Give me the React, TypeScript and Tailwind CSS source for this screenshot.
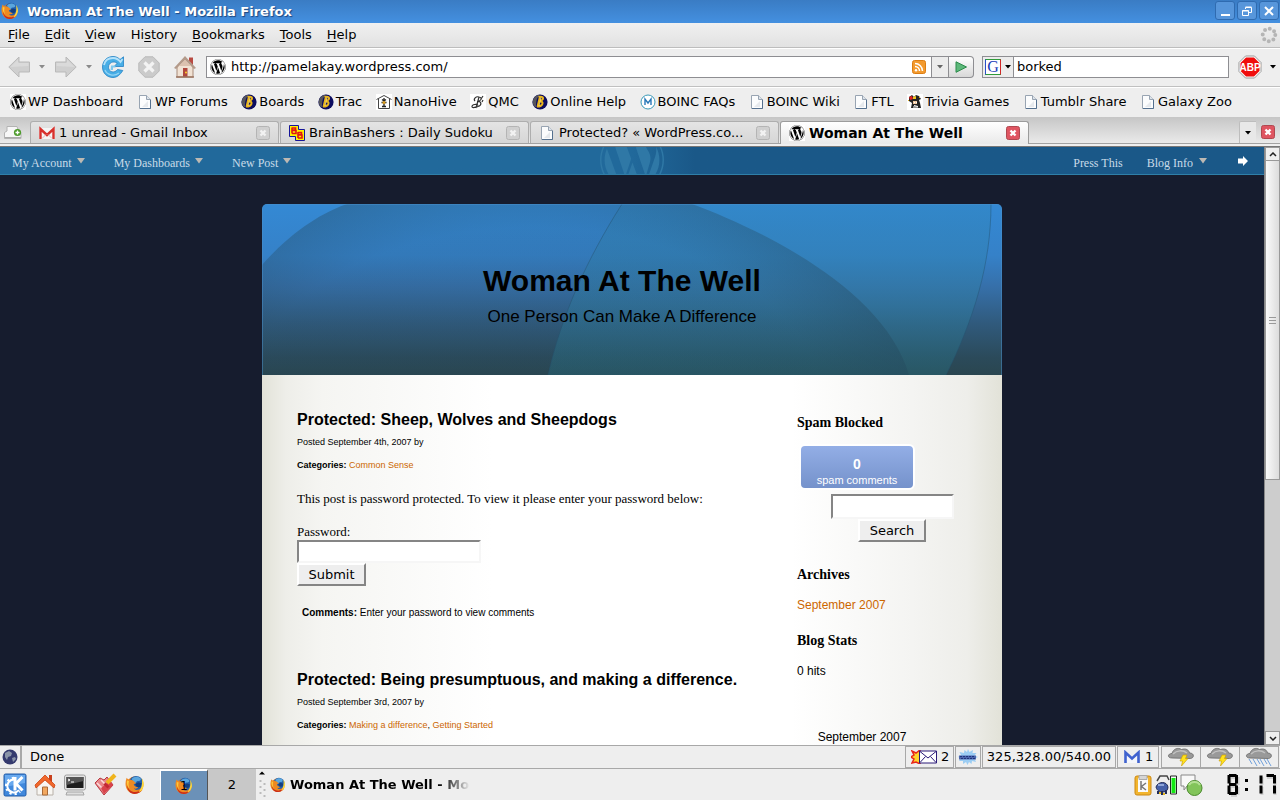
import React, { useState } from "react";
import { FaWordpress } from "react-icons/fa";

type IconProps = { className?: string };

/* ---------- Icons ---------- */

function FirefoxIcon({ className = "w-[18px] h-[18px]" }: IconProps) {
  return (
    <svg viewBox="0 0 18 18" className={className} aria-hidden="true">
      <circle cx="9" cy="9" r="7.6" fill="#e87a1c" />
      <circle cx="10" cy="7.200" r="6.400" fill="#2360ac" />
      <path d="M6 3.500C8 1 12 .8 14 3c1 2-1 2.500-2.500 2.500S10 8 8 7.500z" fill="#5aa6de" />
      <path d="M9 8l3-1.500 3 1-1 3-3 1z" fill="#153f80" />
      <path d="M1.500 2.500C-.2 7 0 12 3.500 15c4 3.200 10 2.200 12.500-2-2.500 1.800-6.500 1.600-8-1 1.600.6 3 .2 4-1-2.200 0-3.600-1-4.200-2.400.6-.9 1.400-1 2.200-1.200C8.500 6 7.500 4.500 5.200 4.200 4 4.400 2.500 4 1.500 2.500z" fill="#ee8a22" />
      <path d="M2 9c.4 3.400 2.500 5.600 5.600 6.200 3.200.6 6-.6 7.800-3-.8 3.200-3.600 4.800-6.600 4.800C4.600 17 1.600 13.600 2 9z" fill="#cb2c1a" />
      <path d="M15 3c2.500 3 2.600 7.400.4 10.200-1 1.200-2 1.800-3.200 2C15 12.500 16 7.500 15 3z" fill="#ffd83c" />
      <path d="M1.800 5c-.4 2.800.2 5.400 2.400 7.400C3 10 3 8 3.600 5.400z" fill="#ffc93a" />
    </svg>
  );
}

function PageIcon() {
  return (
    <svg viewBox="0 0 16 16" className="w-4 h-4 shrink-0" aria-hidden="true">
      <path d="M2.500 1.500h7l4 4v9h-11z" fill="#fbfcfd" stroke="#98a4b2" />
      <path d="M3 14.500h10.500v-9" fill="none" stroke="#54708f" />
      <path d="M9.500 1.500v4h4" fill="#dde3ea" stroke="#98a4b2" />
      <path d="M5 13l6-6v6z" fill="#e6e9ed" />
    </svg>
  );
}

function WpIcon() {
  return (
    <span className="w-4 h-4 bg-white shrink-0">
      <FaWordpress className="w-4 h-4 text-black" />
    </span>
  );
}

function BoardsIcon() {
  return (
    <svg viewBox="0 0 16 16" className="w-4 h-4 shrink-0" aria-hidden="true">
      <circle cx="8" cy="8" r="7.600" fill="#0c0c60" />
      <path d="M.8 9a7.200 7.200 0 0 1 8-8.200C5 3 4 6 4 13.500 2 12 1 11 .8 9z" fill="#55555c" />
      <path d="M8 2.500L5.500 13M6.500 3c6-1.500 6 3 .5 4.500 5.500-1 4.500 5-2 5" fill="none" stroke="#e9b51c" strokeWidth="2" />
      <path d="M9 3.500L7 12" stroke="#fbe27a" strokeWidth=".8" />
    </svg>
  );
}

function HiveIcon() {
  return (
    <svg viewBox="0 0 16 16" className="w-4 h-4 shrink-0" aria-hidden="true">
      <path fill="#fff" d="M0 0h16v16H0z" />
      <path d="M.5 5.500L8 1.500l7.500 4M2.500 5v9.500h11V5" fill="none" stroke="#444" />
      <path d="M8 4v9M5.500 8.500h5M6 12.500h4M6 5.500l2 1.500 2-1.500" fill="none" stroke="#222" strokeWidth="1.300" />
      <circle cx="8" cy="8.500" r="1.600" fill="#d99c20" />
    </svg>
  );
}

function QmcIcon() {
  return (
    <svg viewBox="0 0 16 16" className="w-4 h-4 shrink-0" aria-hidden="true">
      <path fill="#fff" d="M0 0h16v16H0z" />
      <path d="M9 3L6 14M5 7c-2-2 1-5 4-4 4 1 2 4-2 4.500 5-.5 5 4 1 5-3 .8-6 2-6 0s5-3 6-1M13 2l-2 3M13 6l-1 2" fill="none" stroke="#333" strokeWidth="1.200" />
    </svg>
  );
}

function BoincIcon() {
  return (
    <svg viewBox="0 0 16 16" className="w-4 h-4 shrink-0" aria-hidden="true">
      <circle cx="8" cy="8" r="7" fill="#fff" stroke="#3a9ab8" />
      <path d="M5 11V5l3 4 3-4v6" fill="none" stroke="#2878b8" strokeWidth="1.400" />
    </svg>
  );
}

function JesterIcon() {
  return (
    <svg viewBox="0 0 16 16" className="w-4 h-4 shrink-0" aria-hidden="true">
      <path fill="#fff" d="M0 0h16v16H0z" />
      <path d="M2 3l3-2 2 2 2-2 3 1 2 3-2 1 1 3 1 5H4l1-5-3-2z" fill="#222" />
      <path d="M2 3l3-1 1 3-3 1z" fill="#e02020" />
      <path d="M6 3l3-1v3H6z" fill="#f0c820" />
      <path d="M6 7h4v3H6z" fill="#f0c8a0" />
      <path d="M6 13h5M7 11.500l4 1M7 8.500h1M9 8.500h1" stroke="#fff" />
      <path d="M12 3h1v1h-1zM1 6h1v1H1z" fill="#e0b020" />
    </svg>
  );
}

function GmailIcon() {
  return (
    <svg viewBox="0 0 16 16" className="w-4 h-4 shrink-0" aria-hidden="true">
      <path d="M0 3h16v11H0z" fill="#f5f5f5" />
      <path d="M1.500 14V4L8 10l6.500-6v10" fill="none" stroke="#d8302c" strokeWidth="2.400" />
      <path d="M3 13.500l4-4M13 13.500l-4-4" stroke="#e9b4b2" />
    </svg>
  );
}

function BrainIcon() {
  return (
    <svg viewBox="0 0 16 16" className="w-4 h-4 shrink-0" aria-hidden="true">
      <path d="M.5.500h9v4h6v11h-9v-4h-6z" fill="#fff200" stroke="#15159a" />
      <path d="M3 2.500v6M3 3h3.500v2H3M3 5.500h4v3H3M9 7v6M9 7.500h3.500v2H9M9 10h4v3H9" fill="none" stroke="#e01414" strokeWidth="1.600" />
    </svg>
  );
}

function ArrowIcon({ flip }: { flip?: boolean }) {
  return (
    <svg viewBox="0 0 22 22" className={flip ? "w-[22px] h-[22px] -scale-x-100" : "w-[22px] h-[22px]"} aria-hidden="true">
      <path d="M.8 11L11 1v5h10.500v10H11v5z" fill="#cfcfcf" stroke="#b9b9b9" strokeLinejoin="round" />
      <path d="M2.500 11l7.500-7.500V7h10.500v3z" fill="#dadada" />
    </svg>
  );
}

function ReloadIcon() {
  return (
    <svg viewBox="0 0 22 22" className="w-[22px] h-[22px]" aria-hidden="true">
      <path d="M21.500.800v9.700h-9.300l3-3.300c-3.500-2.700-8.700-.7-8.700 4 0 5 6.200 6.500 9 2.300l5.300 1C18 19 15 21.500 11 21.500 5 21.500.5 17 .5 11S5 .5 11 .5c2.800 0 5 1 7 3z" fill="#48aee6" stroke="#2482c4" strokeWidth=".8" />
      <path d="M2 9C3 4 7 2 11 2s6 2 7.500 4L20.500 3" fill="none" stroke="#b5e2fa" strokeWidth="1.800" />
      <path d="M9 9.500h4.500v2H11v2.500H8.600z" fill="#7cc8ee" />
      <path d="M3 14c2 5 9 7 14 3" fill="none" stroke="#93d4f5" strokeWidth="1.200" />
    </svg>
  );
}

function StopIcon() {
  return (
    <svg viewBox="0 0 22 22" className="w-[22px] h-[22px]" aria-hidden="true">
      <path d="M7 .8h8l6.200 6.200v8L15 21.200H7L.8 15V7z" fill="#cbcbcb" stroke="#b9b9b9" />
      <path d="M6.500 6.500l9 9M15.500 6.500l-9 9" stroke="#f3f3f3" strokeWidth="3.200" />
    </svg>
  );
}

function HouseIcon() {
  return (
    <svg viewBox="0 0 22 22" className="w-[22px] h-[22px]" aria-hidden="true">
      <path d="M15 1.500h4V9h-4z" fill="#b84a42" />
      <path d="M3 10l8-8 8 8v11H3z" fill="#f1e2d4" stroke="#a88a78" />
      <path d="M0 12L11 0l11 12-2 1L11 4 2 13z" fill="#b39a8a" />
      <path d="M5 10l6-6 6 6z" fill="#dcc2b0" />
      <path d="M9 12h4.500v9H9z" fill="#b0483e" />
      <circle cx="12" cy="16.500" r="1" fill="#ffd52c" />
      <path d="M2 21h18" stroke="#9b7460" strokeWidth="1.500" />
    </svg>
  );
}

function FeedIcon() {
  return (
    <svg viewBox="0 0 14 14" className="w-[14px] h-[14px] shrink-0" aria-hidden="true">
      <rect x=".5" y=".5" width="13" height="13" rx="2" fill="#f39a2e" stroke="#dc7d12" />
      <circle cx="4" cy="10.200" r="1.200" fill="#fff" />
      <path d="M3 6.500a4.500 4.500 0 0 1 4.500 4.500M3 3.500a7.500 7.500 0 0 1 7.500 7.500" fill="none" stroke="#fff" strokeWidth="1.500" />
    </svg>
  );
}

function Caret({ className = "text-black" }: IconProps) {
  return (
    <svg viewBox="0 0 6 4" className={`w-[6px] h-1 shrink-0 ${className}`} aria-hidden="true">
      <path d="M0 0h6L3 3.500z" fill="currentColor" />
    </svg>
  );
}

function MenuCaret() {
  return (
    <svg viewBox="0 0 8 6" className="w-2 h-[6px] mb-[3px]" aria-hidden="true">
      <path d="M0 0h8L4 5.500z" fill="#bdb9b3" />
    </svg>
  );
}

function CloseMark({ active }: { active?: boolean }) {
  return (
    <svg viewBox="0 0 14 14" className="w-[14px] h-[14px]" aria-hidden="true">
      <rect x=".5" y=".5" width="13" height="13" rx="2" fill={active ? "#df5561" : "#d0d0d0"} stroke={active ? "#b04850" : "#b4b4b4"} />
      <path d="M4.500 4.500l5 5M9.500 4.500l-5 5" stroke={active ? "#fff" : "#f2f2f2"} strokeWidth="2.400" />
    </svg>
  );
}

function WeatherIcon({ rain }: { rain?: boolean }) {
  return (
    <svg viewBox="0 0 28 20" className="w-7 h-5" aria-hidden="true">
      <path d="M5 11C0 11 .5 6.500 5 6.500 6 2 11 0 14.500 2.500 19 1 22 3 22.500 6c5 0 5 5 1 5.500z" fill="#999" stroke="#666" strokeWidth=".8" />
      <path d="M6 7c4-4 10-4 14-1" stroke="#c2c2c2" strokeWidth="1.500" fill="none" />
      {rain ? (
        <path d="M4 12l3 5M8 12l4 7M12 12l3 5M15 12l4 7M19 12l3 5M22 12l4 7" stroke="#6f9fda" />
      ) : (
        <path d="M16 8h4l-1.500 3.500h2.500L14.500 19l1-5H13z" fill="#ffe21c" stroke="#c99a00" strokeWidth=".6" />
      )}
    </svg>
  );
}

/* ---------- Data ---------- */

const MENUS = [
  ["", "F", "ile"],
  ["", "E", "dit"],
  ["", "V", "iew"],
  ["Hi", "s", "tory"],
  ["", "B", "ookmarks"],
  ["", "T", "ools"],
  ["", "H", "elp"],
];

const BOOKMARKS = [
  { label: "WP Dashboard", icon: <WpIcon /> },
  { label: "WP Forums", icon: <PageIcon /> },
  { label: "Boards", icon: <BoardsIcon /> },
  { label: "Trac", icon: <BoardsIcon /> },
  { label: "NanoHive", icon: <HiveIcon /> },
  { label: "QMC", icon: <QmcIcon /> },
  { label: "Online Help", icon: <BoardsIcon /> },
  { label: "BOINC FAQs", icon: <BoincIcon /> },
  { label: "BOINC Wiki", icon: <PageIcon /> },
  { label: "FTL", icon: <PageIcon /> },
  { label: "Trivia Games", icon: <JesterIcon /> },
  { label: "Tumblr Share", icon: <PageIcon /> },
  { label: "Galaxy Zoo", icon: <PageIcon /> },
];

const TABS = [
  { label: "1 unread - Gmail Inbox", icon: <GmailIcon /> },
  { label: "BrainBashers : Daily Sudoku", icon: <BrainIcon /> },
  { label: "Protected? « WordPress.co...", icon: <PageIcon /> },
  { label: "Woman At The Well", icon: <WpIcon /> },
];

/* ---------- Browser chrome ---------- */

function TitleBar() {
  const button = "w-5 h-[19px] rounded-[3px] border border-[#2f6bb0] bg-[#5796db] flex items-center justify-center";
  return (
    <header className="h-[23px] shrink-0 flex items-center bg-linear-to-b from-[#3a7cc4] to-[#4490e0] text-white">
      <FirefoxIcon className="w-[18px] h-[18px] ml-px mb-[2px]" />
      <h1 className="ml-2 text-[13px] font-bold [text-shadow:1px_1px_1px_#1c4580]">Woman At The Well - Mozilla Firefox</h1>
      <div className="ml-auto flex gap-[2px] pr-px pb-[2px]">
        <button className={button} aria-label="Minimize">
          <svg viewBox="0 0 12 12" className="w-3 h-3"><path d="M2 10h9" stroke="#fff" strokeWidth="2" /></svg>
        </button>
        <button className={button} aria-label="Restore">
          <svg viewBox="0 0 12 12" className="w-3 h-3" fill="none" stroke="#fff"><path d="M4.500 4V2.500h6v5H8M1.500 5.500h6v5h-6zM1.500 6h6M4.500 2h6" /></svg>
        </button>
        <button className={button} aria-label="Close">
          <svg viewBox="0 0 12 12" className="w-3 h-3"><path d="M2 2l8 8M10 2l-8 8" stroke="#fff" strokeWidth="2" /></svg>
        </button>
      </div>
    </header>
  );
}

function MenuBar() {
  return (
    <nav className="h-[25px] shrink-0 flex items-center pl-2 pr-[2px] gap-[15px] text-[13px] bg-linear-to-b from-[#f0f0f0] to-[#e2e2e2] border-b border-[#bdbdbd]">
      {MENUS.map(([before, key, after]) => (
        <button key={key + after}>
          {before}
          <u className="underline-offset-2">{key}</u>
          {after}
        </button>
      ))}
      <svg viewBox="0 0 18 18" className="w-[18px] h-[18px] ml-auto" aria-hidden="true">
        <circle cx="9" cy="9" r="6.300" fill="none" stroke="#b5b5b5" strokeWidth="4" strokeDasharray="0 4.950" strokeLinecap="round" />
      </svg>
    </nav>
  );
}

function NavBar() {
  const [url, setUrl] = useState("http://pamelakay.wordpress.com/");
  const [query, setQuery] = useState("borked");

  return (
    <div className="h-[39px] shrink-0 flex items-center pl-2 pr-1 pb-[2px] border-t border-white border-b border-b-[#c0c0c0]">
      <button aria-label="Back"><ArrowIcon /></button>
      <button className="ml-[9px]" aria-label="Back history"><Caret className="text-[#8a8a8a]" /></button>
      <button className="ml-[10px]" aria-label="Forward"><ArrowIcon flip /></button>
      <button className="ml-[9px]" aria-label="Forward history"><Caret className="text-[#8a8a8a]" /></button>
      <button className="ml-[10px]" aria-label="Reload"><ReloadIcon /></button>
      <button className="ml-[14px]" aria-label="Stop"><StopIcon /></button>
      <button className="ml-[14px]" aria-label="Home"><HouseIcon /></button>

      <div className="ml-[10px] h-[22px] flex-1 flex items-center bg-white border border-[#8e8e92] pl-[3px]">
        <WpIcon />
        <input
          aria-label="Location"
          value={url}
          onChange={(e) => setUrl(e.target.value)}
          className="ml-[5px] flex-1 min-w-0 text-[13px] outline-none"
        />
        <FeedIcon />
        <button aria-label="Show history" className="ml-[5px] w-[17px] h-5 flex items-center justify-center bg-[#ececec] border-l border-[#8e8e92]">
          <Caret className="text-[#666]" />
        </button>
      </div>
      <button aria-label="Go" className="w-[25px] h-[22px] flex items-center justify-center border border-l-0 border-[#8e8e92] rounded-r bg-linear-to-b from-white to-[#d8d8d8]">
        <svg viewBox="0 0 12 12" className="w-3 h-3"><path d="M1 .8L11.500 6 1 11.300z" fill="#5db87a" stroke="#2b8a4a" /></svg>
      </button>

      <div className="ml-2 w-[247px] h-[22px] flex items-center bg-white border border-[#8e8e92]">
        <button aria-label="Search engine" className="w-[31px] h-5 flex items-center justify-center gap-1 border-r border-[#8e8e92] bg-[#ececec]">
          <span className="w-4 h-4 flex items-center justify-center bg-white border border-t-[#2f9a3a] border-b-[#2f9a3a] border-l-[#2c50c8] border-r-[#d02828] text-[#2040b8] font-['Liberation_Serif',serif] text-base leading-4">G</span>
          <Caret />
        </button>
        <input
          aria-label="Search"
          value={query}
          onChange={(e) => setQuery(e.target.value)}
          className="px-[3px] flex-1 min-w-0 text-[13px] outline-none"
        />
      </div>
      <button aria-label="Adblock Plus" className="ml-[9px]">
        <svg viewBox="0 0 24 24" className="w-6 h-6">
          <path d="M7.500 1h9L23 7.500v9L16.500 23h-9L1 16.500v-9z" fill="#fff" stroke="#999" />
          <path d="M8 2.500h8L21.500 8v8L16 21.500H8L2.500 16V8z" fill="#f00d0d" />
          <text x="12" y="16" textAnchor="middle" fill="#fff" fontSize="10" fontWeight="bold" fontFamily="Liberation Sans, sans-serif">ABP</text>
        </svg>
      </button>
      <button aria-label="Adblock menu" className="ml-2"><Caret /></button>
    </div>
  );
}

function BookmarksBar() {
  return (
    <nav className="h-[30px] shrink-0 flex items-center justify-between pl-[10px] pr-12 pb-px text-[13px] border-t border-white">
      {BOOKMARKS.map((b) => (
        <a key={b.label} href="#" className="flex items-center gap-[2px] whitespace-nowrap">
          {b.icon}
          {b.label}
        </a>
      ))}
    </nav>
  );
}

function TabBar() {
  const [active, setActive] = useState(3);

  return (
    <div className="h-[30px] shrink-0 flex flex-col bg-[#efefef] border-b border-[#777]">
      <div className="h-[27px] flex items-end bg-linear-to-b from-[#c6c6c6] to-[#eaeaea] border-b border-[#a2a2a2]">
        <button aria-label="New tab" className="w-[30px] h-[22px] flex items-center pl-1">
          <svg viewBox="0 0 18 14" className="w-[18px] h-[14px]">
            <path d="M.5 13.500v-6L3 6V1.500h10l1.500 4.500 2.500 1.500v6z" fill="#f7f7f7" stroke="#b3b3b3" />
            <path d="M1 12.500h16" stroke="#aaa" />
            <circle cx="13.500" cy="7.500" r="3.600" fill="#4c9a2a" />
            <path d="M11.500 7.500h4M13.500 5.500v4" stroke="#fff" strokeWidth="1.300" />
          </svg>
        </button>
        <div className="flex gap-px">
          {TABS.map((tab, i) => (
            <div
              key={tab.label}
              className={
                i === active
                  ? "w-[249px] h-[23px] -mb-px flex items-center pl-2 pr-2 rounded-t-[3px] border border-b-0 border-[#9c9c9c] bg-linear-to-b from-white to-[#e9e9e9]"
                  : "w-[249px] h-[22px] flex items-center pl-2 pr-2 rounded-t-[3px] border border-b-0 border-[#aeaeae] bg-linear-to-b from-[#e4e4e4] to-[#d6d6d6]"
              }
            >
              <button
                onClick={() => setActive(i)}
                className={i === active ? "flex items-center gap-1 font-bold text-sm" : "flex items-center gap-1 text-[13px]"}
              >
                {tab.icon}
                <span className="whitespace-nowrap">{tab.label}</span>
              </button>
              <button aria-label="Close tab" className="ml-auto"><CloseMark active={i === active} /></button>
            </div>
          ))}
        </div>
        <button aria-label="List all tabs" className="ml-auto w-[17px] h-[22px] flex items-center justify-center border-l border-t border-[#bdbdbd] bg-[#e8e8e8] rounded-tl-[2px]">
          <Caret />
        </button>
        <button aria-label="Close current tab" className="ml-[5px] mr-[5px] mb-1"><CloseMark active /></button>
      </div>
    </div>
  );
}

/* ---------- Blog page ---------- */

function AdminBar() {
  return (
    <nav className="relative h-7 flex items-center pl-3 pr-4 pt-1 overflow-hidden text-[12px] text-[#c9dbe8] font-['Liberation_Serif',serif] border-b border-[#2f7fa9] bg-linear-to-r from-[#21699b] from-50% to-[#1a5888] to-55%">
      <FaWordpress className="absolute left-1/2 -ml-[33px] -top-5 w-[66px] h-[66px] text-[#2f78a6]" aria-hidden="true" />
      {["My Account", "My Dashboards", "New Post"].map((item) => (
        <a key={item} href="#" className="flex items-center gap-[5px] mr-[29px]">
          {item}
          <MenuCaret />
        </a>
      ))}
      <a href="#" className="ml-auto">Press This</a>
      <a href="#" className="ml-6 flex items-center gap-[6px]">
        Blog Info
        <MenuCaret />
      </a>
      <a href="#" aria-label="Log out" className="ml-[31px] mb-1">
        <svg viewBox="0 0 10 10" className="w-[10px] h-[10px]"><path d="M0 2.500h5V0l5 5-5 5V7.500H0z" fill="#fff" /></svg>
      </a>
    </nav>
  );
}

function Banner() {
  return (
    <header className="relative h-[171px] rounded-t-[5px] overflow-hidden font-['Liberation_Sans',sans-serif] text-black text-center">
      <svg viewBox="0 0 740 171" preserveAspectRatio="none" className="absolute inset-0 w-full h-full" aria-hidden="true">
        <defs>
          <linearGradient id="sky" x2="0" y2="1">
            <stop offset="0" stopColor="#3489d4" />
            <stop offset=".3" stopColor="#3581c8" />
            <stop offset=".48" stopColor="#3670aa" />
            <stop offset=".7" stopColor="#305a7c" />
            <stop offset=".9" stopColor="#2b4a5a" />
            <stop offset="1" stopColor="#2a4650" />
          </linearGradient>
          <linearGradient id="glass" x2="0" y2="1">
            <stop offset="0" stopColor="#3186c0" stopOpacity=".5" />
            <stop offset=".6" stopColor="#2f7da2" stopOpacity=".5" />
            <stop offset="1" stopColor="#286878" stopOpacity=".5" />
          </linearGradient>
          <radialGradient id="shade" gradientUnits="userSpaceOnUse" cx="0" cy="0" r="1" gradientTransform="translate(270 200) scale(385 235)">
            <stop offset="0" stopColor="#24475c" stopOpacity=".08" />
            <stop offset=".75" stopColor="#24475c" stopOpacity=".14" />
            <stop offset="1" stopColor="#24475c" stopOpacity=".4" />
          </radialGradient>
        </defs>
        <path d="M0 0h740v171H0z" fill="url(#sky)" />
        <path d="M360 0C325 55 300 110 286 171h398C712 115 729 60 729 0z" fill="url(#glass)" />
        <path d="M360 0C325 55 300 110 286 171M684 171C712 115 729 60 729 0" fill="none" stroke="#24526f" strokeOpacity=".45" />
        <path d="M0 61C20 38 50 12 85 0h345C500 26 622 85 647 171H0z" fill="url(#shade)" />
        <path d="M.5 171V5Q.5.500 5 .5h730q4.500 0 4.500 4.500v166" fill="none" stroke="#4a8fc9" strokeOpacity=".5" />
      </svg>
      <div className="relative pt-[57px] pr-5">
        <h1 className="text-[30px] leading-10 font-bold">Woman At The Well</h1>
        <p className="text-[17px] leading-8">One Person Can Make A Difference</p>
      </div>
    </header>
  );
}

function PasswordForm({ id }: { id: string }) {
  return (
    <>
      <form className="mt-[18px] font-['Liberation_Serif',serif] text-[13px]" onSubmit={(e) => e.preventDefault()}>
        <p>This post is password protected. To view it please enter your password below:</p>
        <label htmlFor={id} className="block mt-[17px]">Password:</label>
        <input id={id} type="password" className="block w-[184px] h-[23px] px-1 bg-white border-2 border-t-[#858585] border-l-[#858585] border-b-[#f6f6f6] border-r-[#f6f6f6]" />
        <button className="block w-[69px] h-[23px] bg-[#eee] border-2 border-t-white border-l-white border-b-[#858585] border-r-[#858585] font-['DejaVu_Sans',sans-serif] text-[13px] leading-4">
          Submit
        </button>
      </form>
      <p className="mt-[19px] pl-[5px] text-[10px]">
        <b>Comments:</b> Enter your password to view comments
      </p>
    </>
  );
}

type PostProps = { title: string; date: string; categories: string[]; children?: React.ReactNode };

function Post({ title, date, categories, children }: PostProps) {
  return (
    <article className="pb-[49px] font-['Liberation_Sans',sans-serif]">
      <h2 className="text-base leading-5 font-bold">{title}</h2>
      <p className="mt-1 text-[9px] leading-4">Posted {date} by</p>
      <p className="mt-[7px] text-[9px] leading-4">
        <b>Categories:</b>{" "}
        {categories.map((c, i) => (
          <React.Fragment key={c}>
            {i > 0 && ", "}
            <a href="#" className="text-[#cc6600]">{c}</a>
          </React.Fragment>
        ))}
      </p>
      <div className="leading-4">{children}</div>
    </article>
  );
}

function Sidebar() {
  const heading = "font-['Liberation_Serif',serif] text-sm leading-5 font-bold";
  return (
    <aside className="w-[190px] mr-[15px] shrink-0 pt-[38px] font-['Liberation_Sans',sans-serif] text-xs leading-4">
      <h3 className={heading}>Spam Blocked</h3>
      <a href="#" className="block mt-[11px] ml-[2px] w-[116px] h-[46px] pt-[10px] rounded-md border-2 border-white bg-linear-to-b from-[#93aee6] to-[#7592cb] text-center text-white text-[11px]">
        <b className="block text-sm leading-4">0</b>
        <span>spam comments</span>
      </a>
      <form className="mt-1 flex flex-col items-center" onSubmit={(e) => e.preventDefault()}>
        <input aria-label="Search this blog" className="w-[123px] h-[25px] px-1 bg-white border-2 border-t-[#858585] border-l-[#858585] border-b-[#f6f6f6] border-r-[#f6f6f6]" />
        <button className="w-[68px] h-[23px] bg-[#eee] border-2 border-t-white border-l-white border-b-[#858585] border-r-[#858585] font-['DejaVu_Sans',sans-serif] text-[13px] leading-4">
          Search
        </button>
      </form>
      <h3 className={`${heading} mt-[23px]`}>Archives</h3>
      <a href="#" className="block mt-3 text-[#cc6600]">September 2007</a>
      <h3 className={`${heading} mt-[18px]`}>Blog Stats</h3>
      <p className="mt-3">0 hits</p>
      <p className="mt-[50px] w-[130px] text-center">September 2007</p>
    </aside>
  );
}

function BlogPage() {
  return (
    <div className="flex-1 min-w-0 overflow-hidden bg-[#161c2e] text-black">
      <AdminBar />
      <div className="w-[740px] mx-auto mt-[29px]">
        <Banner />
        <div className="flex bg-[linear-gradient(to_right,#e2e2d8_0,#eeeee9_24px,#f5f5f2_60px,#fff_230px,#fff_530px,#f4f4f2_650px,#eeeeea_705px,#e2e2d8_740px)]">
          <main className="flex-1 pl-[35px] pt-[35px]">
            <Post
              title="Protected: Sheep, Wolves and Sheepdogs"
              date="September 4th, 2007"
              categories={["Common Sense"]}
            >
              <PasswordForm id="post-password" />
            </Post>
            <Post
              title="Protected: Being presumptuous, and making a difference."
              date="September 3rd, 2007"
              categories={["Making a difference", "Getting Started"]}
            />
          </main>
          <Sidebar />
        </div>
      </div>
    </div>
  );
}

function ScrollBar() {
  const button = "h-[14px] shrink-0 flex items-center justify-center border border-[#999] bg-[#efefef]";
  return (
    <div className="w-4 shrink-0 flex flex-col bg-[#cdcdcd] border-l border-[#888]">
      <button className={button} aria-label="Scroll up">
        <svg viewBox="0 0 8 5" className="w-2 h-[5px]"><path d="M1 4l3-3 3 3" fill="none" stroke="#222" strokeWidth="1.500" /></svg>
      </button>
      <div className="flex-1 flex flex-col">
        <div className="h-[56%] flex flex-col gap-[2px] items-center justify-center border border-t-0 border-[#999] bg-linear-to-r from-[#fafafa] to-[#dcdcdc]">
          <span className="w-[7px] h-px bg-[#999]" />
          <span className="w-[7px] h-px bg-[#999]" />
          <span className="w-[7px] h-px bg-[#999]" />
        </div>
      </div>
      <button className={button} aria-label="Scroll down">
        <svg viewBox="0 0 8 5" className="w-2 h-[5px]"><path d="M1 1l3 3 3-3" fill="none" stroke="#222" strokeWidth="1.500" /></svg>
      </button>
    </div>
  );
}

/* ---------- Status bar and desktop panel ---------- */

function StatusBar() {
  const cell = "h-full flex items-center border border-[#a8a8a8] bg-[#eee]";
  return (
    <footer className="h-[24px] shrink-0 flex gap-px text-[13px] border-y border-[#a8a8a8]">
      <div className="w-[22px] flex items-center justify-center border-r-2 border-[#a8a8a8]">
        <svg viewBox="0 0 16 16" className="w-4 h-4" aria-hidden="true">
          <circle cx="8" cy="8" r="7.500" fill="#343a6e" />
          <path d="M3 4l4-2 3 2-1 3-3 1-1 3-2-3zM10 9l3-1 1 2-3 3z" fill="#8a94a8" />
        </svg>
      </div>
      <span className="flex-1 flex items-center pl-[7px]">Done</span>
      <div className={`${cell} w-[49px] pl-[5px] gap-1`}>
        <svg viewBox="0 0 26 14" className="w-[26px] h-[14px] shrink-0" aria-hidden="true">
          <path d="M9 0L5 3 1 1l2 4-3 2 3 2-2 4 4-1 4 2z" fill="#ffd42a" stroke="#e8261a" strokeWidth="1.500" />
          <path d="M8.500 1h17v12h-17z" fill="#fff" stroke="#2a1a78" />
          <path d="M9 1.500l8 6.500 8-6.500M9 12.500l5.500-6M25 12.500l-5.500-6" fill="none" stroke="#2a1a78" />
        </svg>
        2
      </div>
      <div className={`${cell} w-[26px] justify-center`}>
        <svg viewBox="0 0 20 16" className="w-5 h-4" aria-hidden="true">
          <path d="M10 0l1.500 3L15 1l-.5 3 4 0-2 2.500L20 8l-3.500 1.500L18 13l-4-1-.5 3-2.500-2-1.500 3L8 13l-3 2v-3l-4 0 2-3-3-1 3-2-1.500-3L6 4 6.500 1 9 3z" fill="#9ccdf3" />
          <path d="M1 6.500h17v4H1z" fill="#4c66ae" />
          <path d="M2 7.500h14M3 9.500h14" stroke="#20347c" strokeDasharray="2 1" />
        </svg>
      </div>
      <div className={`${cell} w-[134px] justify-center`}>325,328.00/540.00</div>
      <div className={`${cell} w-[42px] pl-[5px] gap-1`}>
        <svg viewBox="0 0 18 14" className="w-[18px] h-[14px] shrink-0" aria-hidden="true">
          <path d="M2.500 13V2.500L9 8.500l6.500-6V13" fill="#f4f6fb" stroke="#3f62cf" strokeWidth="2.600" />
        </svg>
        1
      </div>
      <div className={`${cell} ml-px mr-px divide-x divide-[#a8a8a8]`}>
        <span className="px-[5px]"><WeatherIcon /></span>
        <span className="px-[5px]"><WeatherIcon /></span>
        <span className="px-[5px]"><WeatherIcon rain /></span>
      </div>
    </footer>
  );
}

function LcdClock() {
  return (
    <svg viewBox="0 0 50 24" className="w-[50px] h-6" role="img" aria-label="8:17">
      <g fill="none" stroke="#cfcfcf" strokeWidth="3" transform="translate(1 2)">
        <path d="M2 2v8M2 12v8M10 2v8M10 12v8M3 2.500h6M3 11.500h6M3 20.500h6M34 2v8M34 12v8M39 2.500h7M47 2v8M47 12v8" />
      </g>
      <g fill="none" stroke="#000" strokeWidth="3">
        <path d="M2 2v8.500M2 12.500V21M9.500 2v8.500M9.500 12.500V21M2 2.500h7.500M2 11.500h7.500M2 20.500h7.500" />
        <path d="M18 7.500h3M18 16.500h3" />
        <path d="M34 2.500v8M34 12.500v8M39.500 2.500H47M47.500 2v8.500M47.500 12.500v8" />
      </g>
    </svg>
  );
}

function Panel() {
  return (
    <footer className="h-[31px] shrink-0 flex items-center pl-[3px] pr-[3px]">
      <div className="flex items-center gap-[6px]">
        <button aria-label="K Menu">
          <svg viewBox="0 0 24 24" className="w-6 h-6">
            <rect x="1" y="1" width="22" height="22" rx="1.500" fill="#4088dc" stroke="#235ca8" />
            <path d="M2 2h20v8L2 14z" fill="#67a8ee" />
            <path d="M11 6.500A6.500 6.500 0 1 0 16 17" fill="none" stroke="#fff" strokeWidth="2" />
            <path d="M11 5A8 8 0 1 0 17 18.500" fill="none" stroke="#fff" strokeWidth="2.500" strokeDasharray="2.200 2.800" />
            <path d="M12 4v13.500M19.500 4L13 10.500l6.500 7" fill="none" stroke="#fff" strokeWidth="3" />
          </svg>
        </button>
        <button aria-label="Home folder">
          <svg viewBox="0 0 24 24" className="w-6 h-6">
            <path d="M16 2h3v7h-3z" fill="#c8401c" />
            <path d="M4 11l8-8 8 9v10H4z" fill="#f8f6f2" stroke="#b8b0a8" />
            <path d="M12 2L2 12l1 3 9-8 9 8 1-3z" fill="#f0682c" stroke="#cc4412" strokeWidth=".8" />
            <path d="M9.500 14h5v8h-5z" fill="#f2a860" stroke="#a86a38" />
          </svg>
        </button>
        <button aria-label="Terminal">
          <svg viewBox="0 0 24 24" className="w-6 h-6">
            <rect x="1.500" y="2" width="21" height="15" rx="2" fill="#e4e4e4" stroke="#a0a0a0" />
            <path d="M3.500 4h17v11h-17z" fill="#1d1d1d" />
            <path d="M3.500 4h17v4L3.500 12z" fill="#555" />
            <path d="M5 6l2 1-2 1M8 9h3" stroke="#fff" fill="none" />
            <path d="M4 19h16l1 3H3z" fill="#dedede" stroke="#a5a5a5" />
          </svg>
        </button>
        <button aria-label="Clean up">
          <svg viewBox="0 0 24 24" className="w-6 h-6">
            <path d="M2 10l5-5 4 2 3-3 6 8-9 10z" fill="#e8868a" stroke="#b8363e" />
            <path d="M4 10l9 9M8 7l8 8" stroke="#fbdcdc" strokeWidth="1.500" />
            <path d="M8 15l9-7 3 4-9 9z" fill="#d8444c" />
            <path d="M22 2l-8 8" stroke="#f0b41c" strokeWidth="4" />
            <path d="M11.500 10.500l4 4" stroke="#c22a34" strokeWidth="3" />
          </svg>
        </button>
        <button aria-label="Firefox"><FirefoxIcon className="w-6 h-5" /></button>
      </div>

      <div className="ml-[13px] flex h-full">
        <button className="relative w-12 flex items-center justify-center bg-[#6b91b8] border-t-2 border-l border-r border-t-white border-l-white border-r-[#555]">
          <FirefoxIcon className="w-[18px] h-[18px]" />
          <span className="absolute inset-0 flex items-center justify-center text-[13px]">1</span>
        </button>
        <button className="w-12 bg-[#c8c8c8] text-[13px]">2</button>
      </div>
      <svg viewBox="0 0 10 30" className="w-[10px] h-[30px] ml-px" aria-hidden="true">
        <path d="M2 4.500h6L5 1.500z" fill="#000" />
        <path d="M3.500 10v18M7.500 13v16" stroke="#bbb" strokeWidth="2" strokeDasharray="2 4" />
      </svg>
      <button className="ml-[3px] flex items-center gap-1 text-[13px] font-bold">
        <FirefoxIcon className="w-4 h-4" />
        <span className="w-[180px] overflow-hidden whitespace-nowrap text-left bg-linear-to-r from-black from-80% to-[#eee] to-100% bg-clip-text text-transparent">Woman At The Well - Mo</span>
      </button>

      <div className="ml-auto mr-6 flex items-center gap-px">
        <svg viewBox="0 0 20 24" className="w-5 h-6" aria-hidden="true">
          <rect x="2" y="3" width="16" height="19" rx="2" fill="#f2b52e" stroke="#cc8812" />
          <path d="M5 5h10v14H5z" fill="#fafafa" />
          <path d="M6 2.500h8v4H6z" fill="#d5d5d5" stroke="#aaa" />
          <path d="M8 8v9M13 10l-4.500 3.500L13 17" fill="none" stroke="#777" strokeWidth="1.500" />
        </svg>
        <svg viewBox="0 0 24 24" className="w-6 h-6" aria-hidden="true">
          <path d="M3 8l3-5h7l2 4" fill="none" stroke="#444" strokeWidth="1.500" />
          <path d="M2 14c2-6 11-6 12 0 0 3-2 5-5 5s-6-1-7-5z" fill="#4560a8" stroke="#222c58" />
          <path d="M4 12h6" stroke="#a9bce8" strokeWidth="1.500" />
          <path d="M4 18v3M8 18v4M12 17v4" stroke="#222c58" strokeWidth="2" />
          <path d="M5 19h2v2H5zM9 20h2v2H9z" fill="#e5b820" />
          <path d="M16.500 3h6v18h-6z" fill="#f5f5f5" stroke="#222" />
          <path d="M17.500 5h4v15h-4z" fill="#12e812" />
        </svg>
        <svg viewBox="0 0 24 24" className="w-6 h-6" aria-hidden="true">
          <path d="M2 2h14v11H8l-3 4v-4H2z" fill="#f8f8f8" stroke="#888" />
          <circle cx="15.500" cy="15" r="7.500" fill="#82c45a" stroke="#4a8a2c" />
          <path d="M10 12c2-4 9-4 11 0" fill="none" stroke="#b4e094" strokeWidth="2" />
        </svg>
      </div>
      <LcdClock />
    </footer>
  );
}

export default function App() {
  return (
    <div className="h-screen flex flex-col overflow-hidden bg-[#eee] text-black font-['DejaVu_Sans',sans-serif]">
      <TitleBar />
      <MenuBar />
      <NavBar />
      <BookmarksBar />
      <TabBar />
      <div className="flex-1 min-h-0 flex">
        <BlogPage />
        <ScrollBar />
      </div>
      <StatusBar />
      <Panel />
    </div>
  );
}
